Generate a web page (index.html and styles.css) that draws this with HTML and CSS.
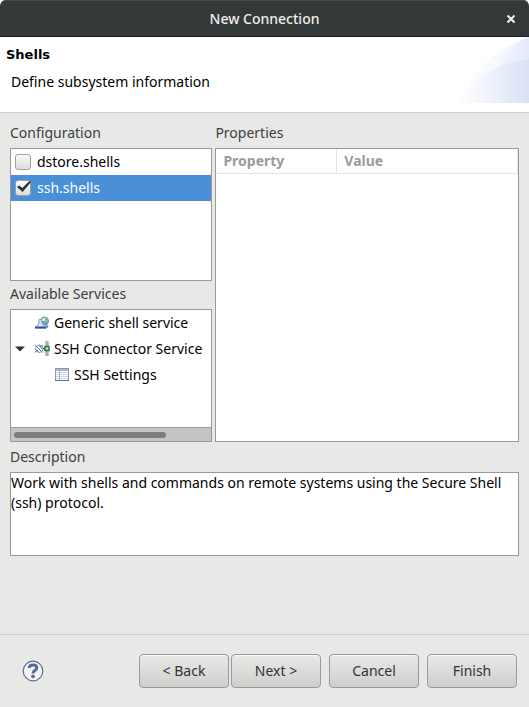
FILE: index.html
```html
<!DOCTYPE html>
<html lang="en">
<head>
<meta charset="utf-8">
<title>New Connection</title>
<link rel="stylesheet" href="styles.css">
</head>
<body>
<div class="dialog">
  <header class="titlebar">
    <h1 class="window-title">New Connection</h1>
    <button class="close" type="button" aria-label="Close">
      <svg width="10" height="10" viewBox="0 0 10 10" aria-hidden="true"><path d="M1.5 1.5 8.5 8.5M8.5 1.5 1.5 8.5" stroke="#eeeeec" stroke-width="2.2" fill="none"/></svg>
    </button>
  </header>

  <section class="banner">
    <div class="banner-text">
      <h2 class="page-title">Shells</h2>
      <p class="page-message">Define subsystem information</p>
    </div>
    <svg class="banner-art" width="75" height="66" viewBox="0 0 75 66" aria-hidden="true">
      <defs>
        <linearGradient id="outer" x1="0" x2="1"><stop offset="0" stop-color="#fff"/><stop offset="1" stop-color="#f1f4fc"/></linearGradient>
        <linearGradient id="middle" x1="0" x2="1"><stop offset="0" stop-color="#fbfcff"/><stop offset="1" stop-color="#e4eaf9"/></linearGradient>
        <linearGradient id="inner" x1="0" x2="1"><stop offset="0" stop-color="#fff"/><stop offset=".4" stop-color="#f1f4fc"/><stop offset="1" stop-color="#dae1f6"/></linearGradient>
      </defs>
      <path d="M3 66C16 36 41 10 75 0V66Z" fill="url(#outer)"/>
      <path d="M30 66C38 36 50 10 75 0V66Z" fill="url(#middle)"/>
      <path d="M3 66C19 42 42 25 75 22V66Z" fill="url(#inner)"/>
    </svg>
  </section>

  <main class="content">
    <div class="panes">
      <div class="column">
        <h3 class="label">Configuration</h3>
        <div class="box list">
          <label class="option"><input class="check" type="checkbox">dstore.shells</label>
          <label class="option selected"><input class="check" type="checkbox" checked>ssh.shells</label>
        </div>
        <h3 class="label">Available Services</h3>
        <div class="box tree-box">
          <ul class="tree">
            <li class="node">
              <span class="expander"></span>
              <svg class="icon" width="16" height="16" viewBox="0 0 16 16" aria-hidden="true">
                <circle cx="10.5" cy="6" r="4" fill="#5f9fd3" stroke="#6d96c0"/>
                <path d="M10 2 13 3 14 6 12 8 10 6Z" fill="#8fbc84"/>
                <circle cx="9.5" cy="4.5" r="1.5" fill="#fffbd8"/>
                <path d="M5 4.5H7.5L8 8 12 13H1.5L5 8Z" fill="#d5e3f6" stroke="#7f9fd0"/>
                <path d="M1 12.5H12.5" fill="none" stroke="#2f50a0" stroke-width="2"/>
                <path d="M12 9.5 14 12.5" stroke="#5d7fb8" stroke-width="1.4"/>
              </svg>
              <span>Generic shell service</span>
            </li>
            <li>
              <div class="node">
                <span class="expander"><svg width="10" height="6" viewBox="0 0 10 6" aria-hidden="true"><path d="M0 .5H10L5 5.5Z" fill="#2e3436"/></svg></span>
                <svg class="icon" width="16" height="16" viewBox="0 0 16 16" aria-hidden="true">
                  <path d="M1.5 4.5 8.5 11.5M4.5 4 9 8.5M1 7.5 5 11.5M8.5 4 6.5 6M1 11.5 3.5 9" stroke="#3b6685" stroke-width="1" fill="none"/>
                  <circle cx="5.2" cy="7.7" r="3.8" fill="none" stroke="#6d91ab" stroke-width=".8"/>
                  <path d="M13 0V15" stroke="#8b8f8e" stroke-width="3"/>
                  <path d="M13 0V15" stroke="#c9cccb"/>
                  <path d="M9 7.5H11" stroke="#3f5a5d"/>
                  <rect x="11" y="5.5" width="4" height="4" fill="#b7e0b4" stroke="#24713b" stroke-width="1.4"/>
                </svg>
                <span>SSH Connector Service</span>
              </div>
              <ul class="tree nested">
                <li class="node">
                  <span class="expander"></span>
                  <svg class="icon" width="16" height="16" viewBox="0 0 16 16" aria-hidden="true">
                    <rect x="1.5" y="1.5" width="13" height="12" fill="#fff" stroke="#8797b4"/>
                    <path d="M2 3H14" stroke="#a7b9d5" stroke-width="2"/>
                    <path d="M2 5.5H14M2 7.5H14M2 9.5H14M2 11.5H14" stroke="#cbd6e7"/>
                    <path d="M5.5 2V13" stroke="#a3b3cc"/>
                    <path d="M1 13.5H15" stroke="#5a7097"/>
                  </svg>
                  <span>SSH Settings</span>
                </li>
              </ul>
            </li>
          </ul>
          <div class="scrollbar"><div class="thumb"></div></div>
        </div>
      </div>
      <div class="column">
        <h3 class="label">Properties</h3>
        <div class="box properties">
          <table class="table">
            <thead><tr><th class="property" scope="col">Property</th><th scope="col">Value</th></tr></thead>
          </table>
        </div>
      </div>
    </div>
    <label class="label" for="description">Description</label>
    <textarea class="box description" id="description" readonly>Work with shells and commands on remote systems using the Secure Shell (ssh) protocol.</textarea>
  </main>

  <footer class="footer">
    <button class="help" type="button" aria-label="Help">
      <svg width="22" height="22" viewBox="0 0 22 22" aria-hidden="true">
        <circle cx="11" cy="11" r="9.8" fill="#f3f4f6" stroke="#5b6c8e" stroke-width="1.2"/>
        <path d="M7.2 8.1C7.2 5.9 9 5 11.1 5 13.3 5 14.8 6.1 14.8 7.9 14.8 10.4 11 10.3 11 13.4" fill="none" stroke="#5b6c8e" stroke-width="3"/>
        <circle cx="11" cy="16.4" r="1.9" fill="#5b6c8e"/>
      </svg>
    </button>
    <div class="pager">
      <button class="button" type="button">&lt; Back</button>
      <button class="button" type="button">Next &gt;</button>
    </div>
    <button class="button" type="button">Cancel</button>
    <button class="button" type="button">Finish</button>
  </footer>
</div>
</body>
</html>
```
FILE: styles.css
```css
* { box-sizing: border-box; }

body {
  margin: 0;
  background: #fff;
  color: #000;
  font: 14px/20px "Noto Sans", sans-serif;
}

h1, h2, h3, p, ul { margin: 0; padding: 0; font: inherit; }
ul { list-style: none; }
button, textarea { font: inherit; }
svg { display: block; flex: none; }

.dialog {
  display: flex;
  flex-direction: column;
  min-height: 100vh;
  background: #e8e8e6;
  border-radius: 6px 6px 0 0;
  overflow: hidden;
}

.titlebar {
  display: grid;
  grid-template-columns: 1fr auto 1fr;
  align-items: center;
  height: 37px;
  padding: 0 13px;
  background: #333939;
  border-top: 1px solid #454c4c;
  border-bottom: 1px solid #1c2020;
  color: #eeeeec;
}

.window-title { grid-column: 2; font-weight: 500; }

.close {
  justify-self: end;
  padding: 0;
  border: 0;
  background: none;
}

.banner {
  display: flex;
  justify-content: space-between;
  height: 76px;
  background: #fff;
  border-bottom: 1px solid #cfcfcd;
}

.banner-text { padding: 8px 6px; }
.page-title { font: bold 13px/20px "DejaVu Sans", sans-serif; }
.page-message { padding: 7px 5px; }

.content {
  flex: 1;
  display: flex;
  flex-direction: column;
  padding: 7px 10px 0;
}

.panes {
  display: grid;
  grid-template-columns: minmax(0, 2fr) minmax(0, 3fr);
  gap: 3px;
  margin-bottom: 2px;
}

.column { display: flex; flex-direction: column; }

.label {
  height: 28px;
  line-height: 26px;
  color: #3a4042;
}

.box { background: #fff; border: 1px solid #989a97; }
.list, .tree-box { height: 133px; }

.option {
  display: flex;
  align-items: center;
  gap: 6px;
  height: 26px;
  padding: 0 4px;
}

.selected { background: #4a90d9; color: #fff; }

.check {
  appearance: none;
  position: relative;
  width: 16px;
  height: 16px;
  margin: 0;
  border: 1px solid #a0a19e;
  border-radius: 3px;
  background: linear-gradient(#fafafa, #dcdcdb);
}

.check:checked::after {
  content: "";
  position: absolute;
  left: 1px;
  top: 0;
  width: 14px;
  height: 11px;
  background: #2e3436;
  clip-path: polygon(0 55%, 16% 42%, 38% 63%, 88% 0, 100% 10%, 40% 100%);
}

.tree-box { display: flex; flex-direction: column; overflow: hidden; }
.tree { flex: 1; white-space: nowrap; }
.node { display: flex; align-items: center; height: 26px; }
.expander { flex: none; width: 23px; padding-left: 4px; }
.icon { margin-right: 4px; }
.nested { padding-left: 20px; }

.scrollbar {
  height: 14px;
  padding: 4px 3px 3px;
  background: #c3c5c3;
  border-top: 1px solid #989a97;
}

.thumb { width: 78%; height: 6px; border-radius: 3px; background: #7b7d7c; }

.properties { flex: 1; }
.table { width: 100%; border-collapse: collapse; table-layout: fixed; }

.table th {
  height: 24px;
  padding: 0 7px;
  border-right: 1px solid #e3e3e2;
  border-bottom: 1px solid #e3e3e2;
  color: #999c9b;
  font-weight: bold;
  text-align: left;
}

.table .property { width: 40%; }

.description {
  display: block;
  width: 100%;
  height: 84px;
  margin: 0;
  padding: 0;
  color: #000;
  outline: 0;
  resize: none;
}

.footer {
  display: flex;
  align-items: center;
  gap: 8px;
  height: 73px;
  padding: 0 12px 0 22px;
  border-top: 1px solid #cfcfcd;
}

.help { margin-right: auto; padding: 0; border: 0; background: none; }
.pager { display: flex; gap: 2px; }

.button {
  width: 90px;
  height: 34px;
  padding: 0;
  border: 1px solid #989a97;
  border-radius: 4px;
  background: linear-gradient(#e8e8e7, #cfcfce);
  box-shadow: inset 0 1px #f8f8f8;
  color: #2e3436;
}
```
